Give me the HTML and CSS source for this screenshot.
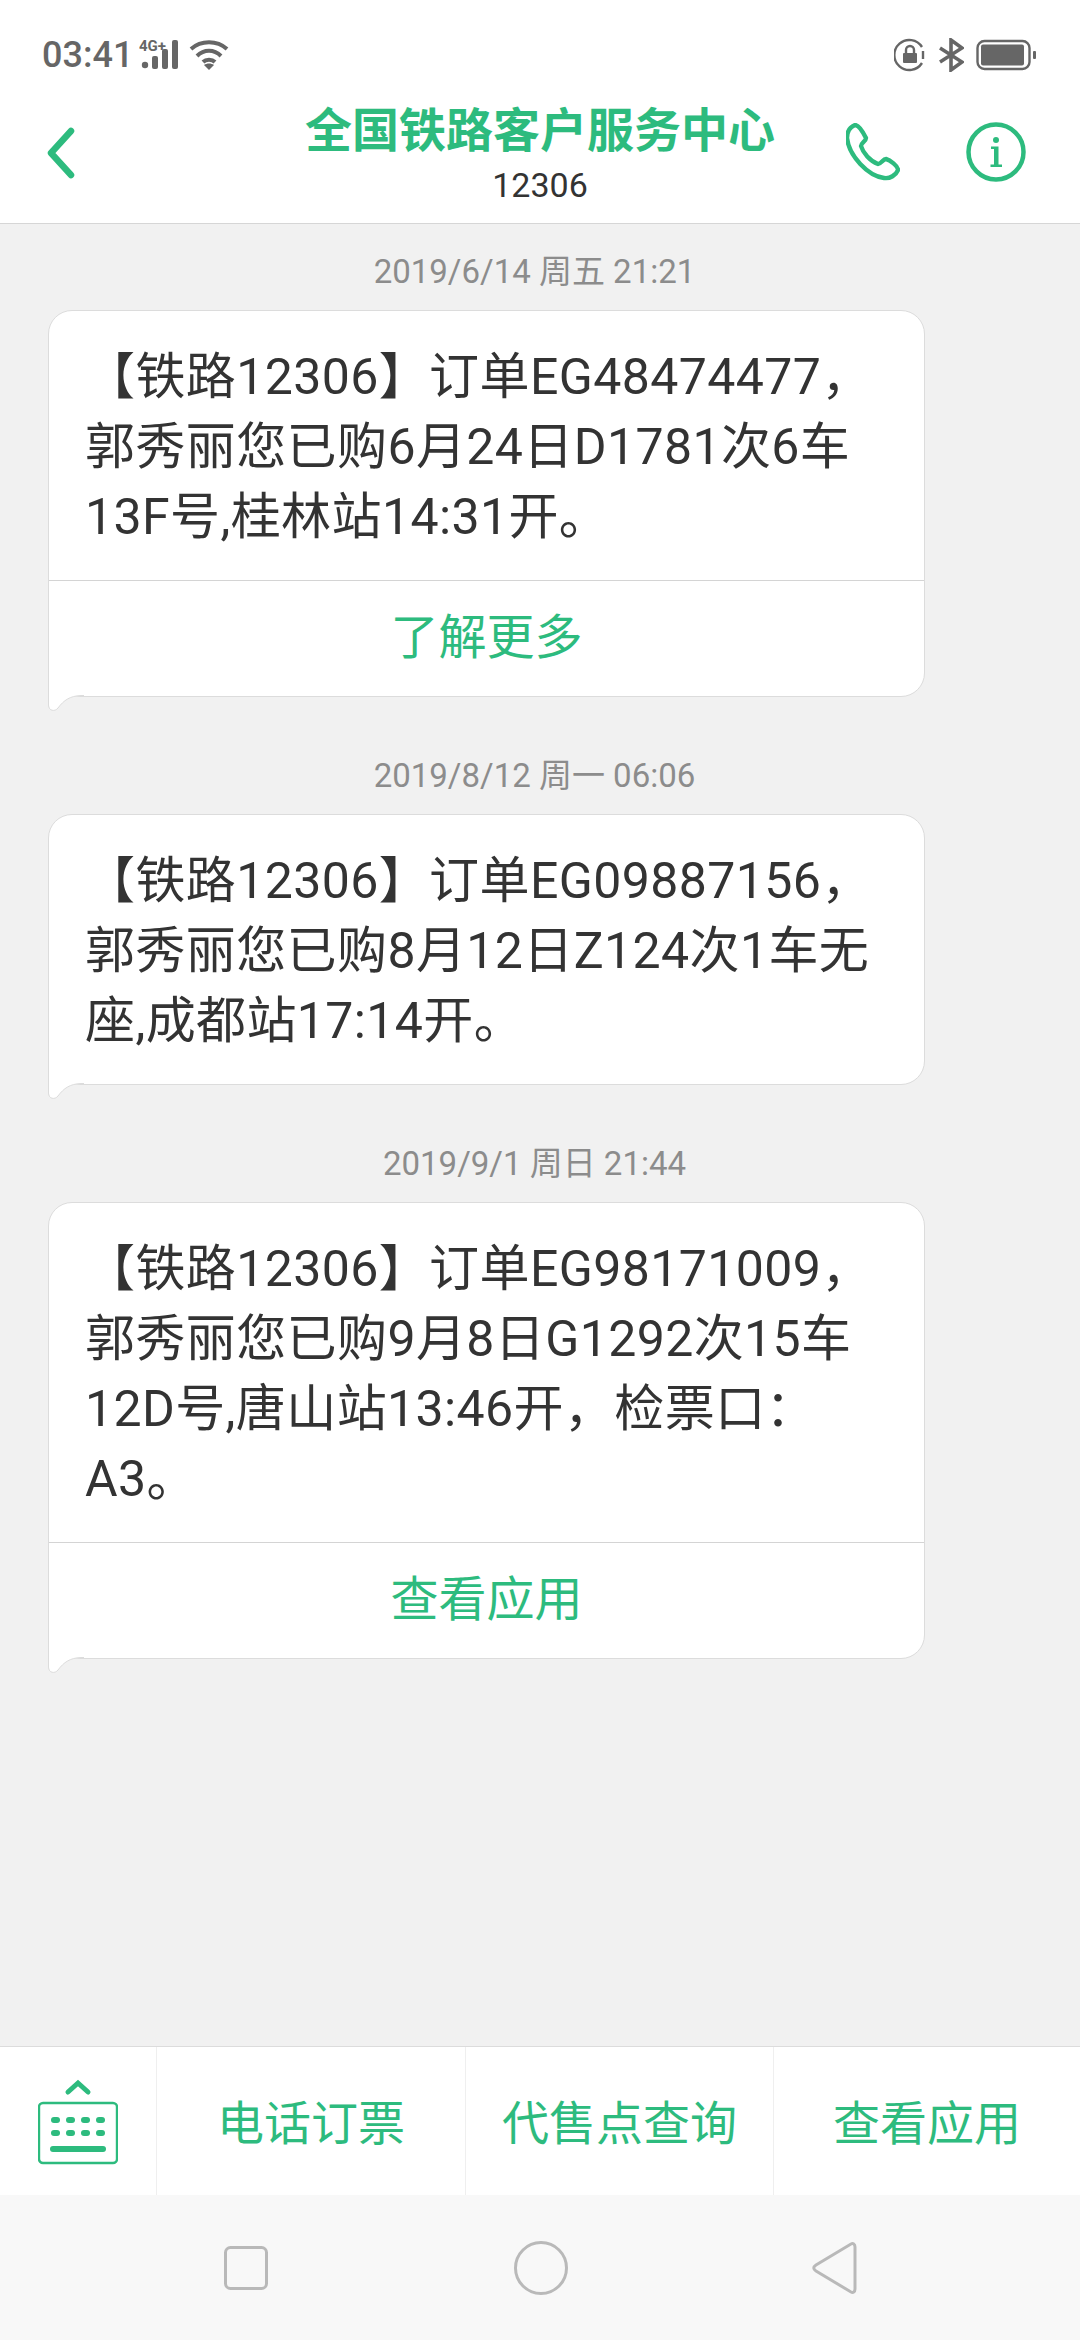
FILE: index.html
```html
<!DOCTYPE html>
<html lang="zh-CN">
<head>
<meta charset="utf-8">
<title>12306</title>
<link rel="stylesheet" href="styles.css">
</head>
<body>
<div class="screen">
  <header class="top">
    <div class="status">
      <div class="status-left">
        <span class="clock">03:41</span>
        <svg class="sig" width="42" height="34" viewBox="0 0 42 34"><text x="0" y="13" class="sig-text">4G+</text><circle cx="6" cy="27" r="3.2" fill="#666"/><rect x="13" y="18" width="6" height="13" rx="2" fill="#666"/><rect x="23" y="11" width="6" height="20" rx="2" fill="#666"/><rect x="33" y="2" width="6" height="29" rx="2" fill="#666"/></svg>
        <svg class="wifi" width="40" height="32" viewBox="0 0 40 32" fill="none" stroke="#666" stroke-width="4"><path d="M2 10C12 1 28 1 38 10"/><path d="M8 17C15 10 25 10 32 17"/><path d="M14 23C17 20 23 20 26 23"/><path d="M20 31l-5-5c3-2 7-2 10 0z" fill="#666" stroke="none"/></svg>
      </div>
      <div class="status-right">
        <svg width="32" height="34" viewBox="0 0 32 34" fill="none"><path d="M28 9A15 15 0 1 0 28 25" stroke="#666" stroke-width="2.4"/><path d="M29 13v8" stroke="#666" stroke-width="2.4"/><rect x="9" y="15" width="14" height="10" rx="1" fill="#666"/><path d="M12 15v-3a4 4 0 0 1 8 0v3" stroke="#666" stroke-width="2.4"/></svg>
        <svg width="26" height="34" viewBox="0 0 26 34" fill="none" stroke="#666" stroke-width="3.6"><path d="M2 10L24 24L13 32V2L24 10L2 24"/></svg>
        <svg width="60" height="32" viewBox="0 0 60 32"><rect x="1.5" y="2" width="52" height="28" rx="7" fill="none" stroke="#666" stroke-width="2.4"/><rect x="5" y="5.5" width="43" height="21" rx="2" fill="#666"/><rect x="57" y="12" width="3" height="8" rx="1" fill="#666"/></svg>
      </div>
    </div>
    <div class="nav">
      <svg class="back" width="30" height="52" viewBox="0 0 30 52" fill="none" stroke="#2dbb7e" stroke-width="6.5" stroke-linecap="round" stroke-linejoin="round"><path d="M25 4L5 26L25 48"/></svg>
      <div class="who">
        <div class="who-name">全国铁路客户服务中心</div>
        <div class="who-num">12306</div>
      </div>
      <div class="actions">
        <svg width="54" height="58" viewBox="0 0 54 58" fill="none" stroke="#2dbb7e" stroke-width="4.4" stroke-linejoin="round"><path d="M9 2C13 2 18 11 20 15C20 18 15 20 15 23C17 30 24 38 32 41C35 41 37 36 40 36C44 37 52 43 52 47C50 52 44 56 38 55C22 53 3 33 1 15C1 9 4 4 9 2Z"/></svg>
        <svg width="60" height="60" viewBox="0 0 60 60" fill="none"><circle cx="30" cy="30" r="27.5" stroke="#2dbb7e" stroke-width="4.5"/><circle cx="30" cy="18" r="3" fill="#2dbb7e"/><path d="M25 24.5h7.5V42.500H36V45H24.500V42.500H28V27H25Z" fill="#2dbb7e"/></svg>
      </div>
    </div>
  </header>

  <main class="thread">
    <div class="stamp">2019/6/14 周五 21:21</div>
    <article class="bubble">
      <p class="msg">【铁路12306】订单EG48474477，<br>郭秀丽您已购6月24日D1781次6车<br>13F号,桂林站14:31开。</p>
      <div class="more">了解更多</div>
      <svg class="tail" width="36" height="18" viewBox="0 0 36 18"><path d="M1 0V11C1 17 7 18 10 14C16 6 22 2 33 2H36V0Z" fill="#fff"/><path d="M.5 0V11C.5 17 7 18 10 14C16 6 22 2 33 1.500H36" fill="none" stroke="#dcdcdc"/></svg>
    </article>
    <div class="stamp">2019/8/12 周一 06:06</div>
    <article class="bubble">
      <p class="msg">【铁路12306】订单EG09887156，<br>郭秀丽您已购8月12日Z124次1车无<br>座,成都站17:14开。</p>
      <svg class="tail" width="36" height="18" viewBox="0 0 36 18"><path d="M1 0V11C1 17 7 18 10 14C16 6 22 2 33 2H36V0Z" fill="#fff"/><path d="M.5 0V11C.5 17 7 18 10 14C16 6 22 2 33 1.500H36" fill="none" stroke="#dcdcdc"/></svg>
    </article>
    <div class="stamp">2019/9/1 周日 21:44</div>
    <article class="bubble">
      <p class="msg">【铁路12306】订单EG98171009，<br>郭秀丽您已购9月8日G1292次15车<br>12D号,唐山站13:46开，检票口：<br>A3。</p>
      <div class="more">查看应用</div>
      <svg class="tail" width="36" height="18" viewBox="0 0 36 18"><path d="M1 0V11C1 17 7 18 10 14C16 6 22 2 33 2H36V0Z" fill="#fff"/><path d="M.5 0V11C.5 17 7 18 10 14C16 6 22 2 33 1.500H36" fill="none" stroke="#dcdcdc"/></svg>
    </article>
  </main>

  <footer class="bar">
    <div class="kbd">
      <svg width="80" height="86" viewBox="0 0 80 86"><path d="M30 13L40 4L50 13" fill="none" stroke="#2dbb7e" stroke-width="5" stroke-linecap="round"/><rect x="1" y="24" width="78" height="60" rx="4" fill="none" stroke="#2dbb7e" stroke-width="2.400"/><g fill="#2dbb7e"><rect x="13" y="38" width="9" height="6" rx="3"/><rect x="28" y="38" width="9" height="6" rx="3"/><rect x="43" y="38" width="9" height="6" rx="3"/><rect x="58" y="38" width="9" height="6" rx="3"/><rect x="13" y="51" width="9" height="6" rx="3"/><rect x="28" y="51" width="9" height="6" rx="3"/><rect x="43" y="51" width="9" height="6" rx="3"/><rect x="58" y="51" width="9" height="6" rx="3"/><rect x="12" y="67" width="56" height="6" rx="3"/></g></svg>
    </div>
    <div class="btn">电话订票</div>
    <div class="btn">代售点查询</div>
    <div class="btn">查看应用</div>
  </footer>

  <nav class="sysnav">
    <svg width="44" height="44" viewBox="0 0 44 44"><rect x="1.500" y="1.500" width="41" height="41" rx="5" fill="none" stroke="#b9b9b9" stroke-width="3"/></svg>
    <svg width="54" height="54" viewBox="0 0 54 54"><circle cx="27" cy="27" r="25.500" fill="none" stroke="#b9b9b9" stroke-width="3"/></svg>
    <svg width="46" height="52" viewBox="0 0 46 52"><path d="M43 5C43 2 41 1 39 2L4 23C1 25 1 27 4 29L39 50C41 51 43 50 43 47Z" fill="none" stroke="#b9b9b9" stroke-width="3"/></svg>
  </nav>
</div>
</body>
</html>
```
FILE: styles.css
```css
* { box-sizing: border-box; margin: 0; padding: 0; }
html, body { width: 1080px; height: 2340px; overflow: hidden; }
body { font-family: Roboto, "Noto Sans CJK SC", sans-serif; background: #f1f1f1; }
.screen { width: 1080px; height: 2340px; display: flex; flex-direction: column; }

.top { height: 224px; background: #fff; border-bottom: 1px solid #d6d6d6; flex: none; }
.status { height: 88px; padding: 37px 44px 0 42px; display: flex; justify-content: space-between; align-items: flex-start; }
.status-left { display: flex; align-items: center; gap: 6px; height: 36px; }
.status-right { display: flex; align-items: center; gap: 12px; height: 36px; }
.clock { font-size: 36px; font-weight: 500; color: #666; line-height: 36px; }
.sig-text { font: 700 15px Roboto, sans-serif; fill: #666; }
.wifi { margin-left: 2px; }

.nav { position: relative; height: 135px; display: flex; align-items: flex-start; justify-content: space-between; padding: 39px 54px 0 46px; }
.who { position: absolute; left: 0; right: 0; top: 15px; text-align: center; }
.who-name { font-size: 47px; font-weight: 700; line-height: 56px; color: #2dbb7e; }
.who-num { font-size: 34px; line-height: 40px; color: #333; margin-top: 6px; }
.actions { position: relative; display: flex; align-items: center; gap: 66px; margin-top: -5px; }

.thread { flex: 1; display: flex; flex-direction: column; padding: 26px 0 0 48px; }
.stamp { height: 44px; line-height: 44px; margin-bottom: 16px; padding-right: 11px; text-align: center; font-size: 33px; color: #8c8c8c; margin-left: -48px; }
.bubble + .stamp { margin-top: 57px; }
.bubble { position: relative; background: #fff; border: 1px solid #dcdcdc; border-radius: 24px 24px 24px 0; width: 877px; }
.msg { padding: 31px 36px 28px 36px; font-size: 50px; line-height: 70px; letter-spacing: .4px; color: #333; white-space: nowrap; }
.more { border-top: 1px solid #d4d4d4; height: 116px; padding-bottom: 11px; display: flex; align-items: center; justify-content: center; font-size: 48px; color: #2dbb7e; }
.tail { position: absolute; left: -1px; bottom: -16px; }

.bar { flex: none; height: 149px; background: #fff; border-top: 1px solid #dcdcdc; display: grid; grid-template-columns: 156px 309px 308px 307px; }
.kbd { display: flex; align-items: center; justify-content: center; padding-top: 2px; }
.btn { display: flex; align-items: center; justify-content: center; padding-bottom: 4px; font-size: 47px; color: #2dbb7e; border-left: 1px solid #efefef; }

.sysnav { flex: none; height: 145px; background: #f8f8f8; display: flex; align-items: center; padding-left: 224px; }
.sysnav svg:nth-child(2) { margin-left: 246px; }
.sysnav svg:nth-child(3) { margin-left: 244px; }
```
